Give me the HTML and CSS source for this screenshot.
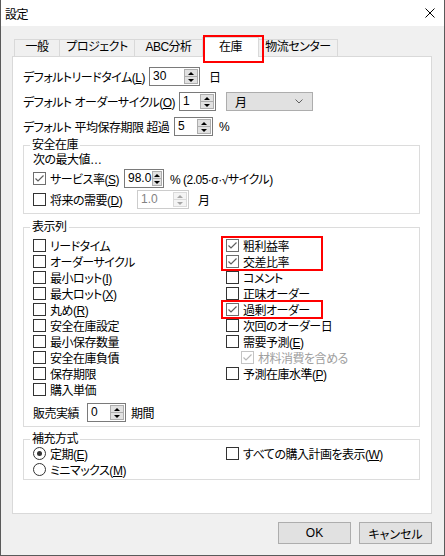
FILE: index.html
```html
<!DOCTYPE html>
<html lang="ja">
<head>
  <meta charset="UTF-8" />
  <meta name="viewport" content="width=device-width, initial-scale=1.0" />
  <title>設定</title>
  <link rel="stylesheet" href="styles.css">
</head>
<body>
  <div class="window">
    <div class="titlebar">
      <span>設定</span>
      <svg class="close" width="10" height="10" viewBox="0 0 10 10"><path d="M0.5 0.5L9.5 9.5M9.5 0.5L0.5 9.5" stroke="#000" stroke-width="1" fill="none"/></svg>
    </div>

    <div class="client">
      <div class="tabs">
        <div class="tab t1">一般</div>
        <div class="tab t2">プロジェクト</div>
        <div class="tab t3">ABC分析</div>
        <div class="tab active">在庫</div>
        <div class="tab t5">物流センター</div>
      </div>

      <div class="panel">
        <div class="frow">
          <span class="lbl l1">デフォルトリードタイム(<u>L</u>)</span>
          <div class="spin w51"><span class="val">30</span><span class="arrows"><i class="up"></i><i class="down"></i></span></div>
          <span class="unit u9">日</span>
        </div>
        <div class="frow">
          <span class="lbl l2">デフォルト オーダーサイクル(<u>O</u>)</span>
          <div class="spin w37"><span class="val">1</span><span class="arrows"><i class="up"></i><i class="down"></i></span></div>
          <div class="select">月<svg width="8" height="5" viewBox="0 0 8 5"><path d="M0.5 0.5L4 4L7.5 0.5" stroke="#606060" fill="none"/></svg></div>
        </div>
        <div class="frow">
          <span class="lbl l3">デフォルト 平均保存期限 超過</span>
          <div class="spin w39"><span class="val">5</span><span class="arrows"><i class="up"></i><i class="down"></i></span></div>
          <span class="unit u6">%</span>
        </div>

        <fieldset class="group g1">
          <legend>安全在庫</legend>
          <div class="note">次の最大値…</div>
          <div class="srow">
            <label class="chk l4"><span class="cb on"><svg viewBox="0 0 11 11"><polyline points="1.5,5.5 4,8 9.5,2.5"/></svg></span><span>サービス率(<u>S</u>)</span></label>
            <div class="spin w40"><span class="val">98.0</span><span class="arrows"><i class="up"></i><i class="down"></i></span></div>
            <span class="unit u6">% (2.05·σ·√サイクル)</span>
          </div>
          <div class="srow">
            <label class="chk l5"><span class="cb"></span><span>将来の需要(<u>D</u>)</span></label>
            <div class="spin w52 off"><span class="val">1.0</span><span class="arrows"><i class="up"></i><i class="down"></i></span></div>
            <span class="unit u9">月</span>
          </div>
        </fieldset>

        <fieldset class="group g2">
          <legend>表示列</legend>
          <div class="cols">
            <div class="col">
              <label class="chk"><span class="cb"></span><span>リードタイム</span></label>
              <label class="chk"><span class="cb"></span><span>オーダーサイクル</span></label>
              <label class="chk"><span class="cb"></span><span>最小ロット(<u>I</u>)</span></label>
              <label class="chk"><span class="cb"></span><span>最大ロット(<u>X</u>)</span></label>
              <label class="chk"><span class="cb"></span><span>丸め(<u>R</u>)</span></label>
              <label class="chk"><span class="cb"></span><span>安全在庫設定</span></label>
              <label class="chk"><span class="cb"></span><span>最小保存数量</span></label>
              <label class="chk"><span class="cb"></span><span>安全在庫負債</span></label>
              <label class="chk"><span class="cb"></span><span>保存期限</span></label>
              <label class="chk"><span class="cb"></span><span>購入単価</span></label>
            </div>
            <div class="col">
              <div class="hl">
                <label class="chk"><span class="cb on"><svg viewBox="0 0 11 11"><polyline points="1.5,5.5 4,8 9.5,2.5"/></svg></span><span>粗利益率</span></label>
                <label class="chk"><span class="cb on"><svg viewBox="0 0 11 11"><polyline points="1.5,5.5 4,8 9.5,2.5"/></svg></span><span>交差比率</span></label>
              </div>
              <label class="chk"><span class="cb"></span><span>コメント</span></label>
              <label class="chk"><span class="cb"></span><span>正味オーダー</span></label>
              <div class="hl">
                <label class="chk"><span class="cb on"><svg viewBox="0 0 11 11"><polyline points="1.5,5.5 4,8 9.5,2.5"/></svg></span><span>過剰オーダー</span></label>
              </div>
              <label class="chk"><span class="cb"></span><span>次回のオーダー日</span></label>
              <label class="chk"><span class="cb"></span><span>需要予測(<u>E</u>)</span></label>
              <label class="chk sub dis"><span class="cb on"><svg viewBox="0 0 11 11"><polyline points="1.5,5.5 4,8 9.5,2.5"/></svg></span><span>材料消費を含める</span></label>
              <label class="chk"><span class="cb"></span><span>予測在庫水準(<u>P</u>)</span></label>
            </div>
          </div>
          <div class="srow sales">
            <span class="lbl l6">販売実績</span>
            <div class="spin w39"><span class="val">0</span><span class="arrows"><i class="up"></i><i class="down"></i></span></div>
            <span class="unit u5">期間</span>
          </div>
        </fieldset>

        <fieldset class="group g3">
          <legend>補充方式</legend>
          <div class="cols">
            <div class="col">
              <label class="chk"><span class="rb on"></span><span>定期(<u>E</u>)</span></label>
              <label class="chk"><span class="rb"></span><span>ミニマックス(<u>M</u>)</span></label>
            </div>
            <div class="col">
              <label class="chk"><span class="cb"></span><span>すべての購入計画を表示(<u>W</u>)</span></label>
            </div>
          </div>
        </fieldset>
      </div>

      <div class="buttons">
        <button class="btn">OK</button>
        <button class="btn">キャンセル</button>
      </div>
    </div>
  </div>
</body>
</html>
```

FILE: styles.css
```css
* {
  box-sizing: border-box;
}
body {
  margin: 0;
  font-family: "Liberation Sans", "Noto Sans CJK JP", sans-serif;
  font-size: 12px;
  color: #000;
  font-feature-settings: "palt";
  letter-spacing: -0.5px;
}
u {
  text-underline-offset: 1px;
}
.window {
  width: 445px;
  height: 556px;
  border: 1px solid #5a5a5a;
  border-top: none;
  background: #f0f0f0;
  display: flex;
  flex-direction: column;
}
.titlebar {
  height: 26px;
  background: #fff;
  display: flex;
  align-items: center;
  justify-content: space-between;
  padding: 0 9px 0 4px;
}
.client {
  flex: 1;
  padding: 11px 12px 0 11px;
  display: flex;
  flex-direction: column;
}

/* tabs */
.tabs {
  display: flex;
  align-items: flex-end;
  height: 19px;
  padding-left: 2px;
}
.tab {
  height: 17px;
  line-height: 15px;
  text-align: center;
  border: 1px solid #d9d9d9;
  border-bottom: none;
  border-right: none;
  background: #f0f0f0;
}
.t1 { width: 45px; }
.t2 { width: 75px; }
.t3 { width: 68px; }
.t5 {
  width: 79px;
  border-left: none;
  border-right: 1px solid #d9d9d9;
}
.tab.active {
  width: 57px;
  height: 20px;
  line-height: 19px;
  margin-bottom: -1px;
  background: #fff;
  border-right: 1px solid #d9d9d9;
  position: relative;
  z-index: 2;
}
.tab.active::after {
  content: "";
  position: absolute;
  left: 0;
  top: -3px;
  width: 57px;
  height: 24px;
  border: 2px solid #f00;
}

/* panel */
.panel {
  height: 458px;
  background: #fff;
  border: 1px solid #d9d9d9;
  padding: 7px 11px 0 10px;
}
.frow {
  display: flex;
  align-items: center;
  height: 25px;
}
.lbl, .chk, .unit {
  white-space: nowrap;
  flex-shrink: 0;
}
.lbl, .l4, .l5 {
  padding-right: 4px;
}
.l1 { min-width: 123px; }
.l2 { min-width: 147px; }
.l3 { min-width: 151px; }
.l4 { min-width: 91px; }
.l5 { min-width: 104px; }
.l6 { min-width: 54px; }
.u5 { margin-left: 5px; }
.u6 { margin-left: 6px; }
.u9 { margin-left: 9px; }

/* spin edit */
.spin {
  display: flex;
  flex-shrink: 0;
  height: 19px;
  border: 1px solid #7a7a7a;
  background: #fff;
}
.w37 { width: 37px; }
.w39 { width: 39px; }
.w40 { width: 40px; }
.w51 { width: 51px; }
.w52 { width: 52px; }
.spin .val {
  flex: 1;
  padding-left: 3px;
  line-height: 17px;
  letter-spacing: 0;
}
.spin .arrows {
  width: 14px;
  margin: 1px;
  display: flex;
  flex-direction: column;
  background: #e1e1e1;
  border: 1px solid #adadad;
}
.spin .arrows i {
  flex: 1;
  display: flex;
  align-items: center;
  justify-content: center;
}
.spin .arrows i + i {
  border-top: 1px solid #adadad;
}
.spin .up::before,
.spin .down::before {
  content: "";
  border-left: 3px solid transparent;
  border-right: 3px solid transparent;
}
.spin .up::before { border-bottom: 3px solid #000; }
.spin .down::before { border-top: 3px solid #000; }
.spin.off {
  border-color: #cccccc;
  color: #838383;
}
.spin.off .arrows {
  background: #f4f4f4;
  border-color: #dadada;
}
.spin.off .arrows i + i { border-top-color: #dadada; }
.spin.off .up::before { border-bottom-color: #a6a6a6; }
.spin.off .down::before { border-top-color: #a6a6a6; }

.select {
  width: 87px;
  height: 19px;
  margin-left: 10px;
  background: #e1e1e1;
  border: 1px solid #adadad;
  display: flex;
  align-items: center;
  justify-content: space-between;
  padding: 0 9px 0 8px;
}

/* groups */
.group {
  width: 397px;
  margin: 0;
  padding: 0 0 3px 9px;
  border: 1px solid #dcdcdc;
}
.group legend {
  padding: 0 2px;
  margin-left: -3px;
  line-height: 12px;
}
.g1 { padding-top: 1px; }
.g2 {
  margin-top: 7px;
  padding-top: 4px;
}
.g3 {
  margin-top: 6px;
  padding-bottom: 2px;
}
.note {
  height: 16px;
  line-height: 16px;
}
.srow {
  display: flex;
  align-items: center;
  height: 21px;
}
.sales { margin-top: 5px; }

.cols {
  display: grid;
  grid-template-columns: 193px 1fr;
}
.col {
  display: flex;
  flex-direction: column;
}
.chk {
  display: flex;
  align-items: center;
  gap: 4px;
  height: 16px;
}
.chk.sub { padding-left: 15px; }
.chk.dis { color: #a0a0a0; }

.cb {
  width: 13px;
  height: 13px;
  flex: none;
  border: 1px solid #333;
  background: #fff;
}
.cb svg {
  display: block;
  width: 11px;
  height: 11px;
  fill: none;
  stroke: #5e5e5e;
  stroke-width: 1.2;
}
.cb.on { border-color: #6e6e6e; }
.dis .cb { border-color: #c4c4c4; }
.dis .cb svg { stroke: #b8b8b8; }

.rb {
  width: 13px;
  height: 13px;
  flex: none;
  border: 1px solid #333;
  border-radius: 50%;
  background: #fff;
  display: flex;
  align-items: center;
  justify-content: center;
}
.rb.on::before {
  content: "";
  width: 5px;
  height: 5px;
  border-radius: 50%;
  background: #333;
}

.hl {
  position: relative;
}
.hl::after {
  content: "";
  position: absolute;
  left: -5px;
  top: -1px;
  bottom: -2px;
  width: 98px;
  border: 2px solid #f00;
}

/* buttons */
.buttons {
  display: flex;
  justify-content: flex-end;
  gap: 8px;
  margin-top: 8px;
}
.btn {
  width: 73px;
  height: 22px;
  padding: 0;
  font: inherit;
  color: #000;
  background: #e1e1e1;
  border: 1px solid #adadad;
}
```
